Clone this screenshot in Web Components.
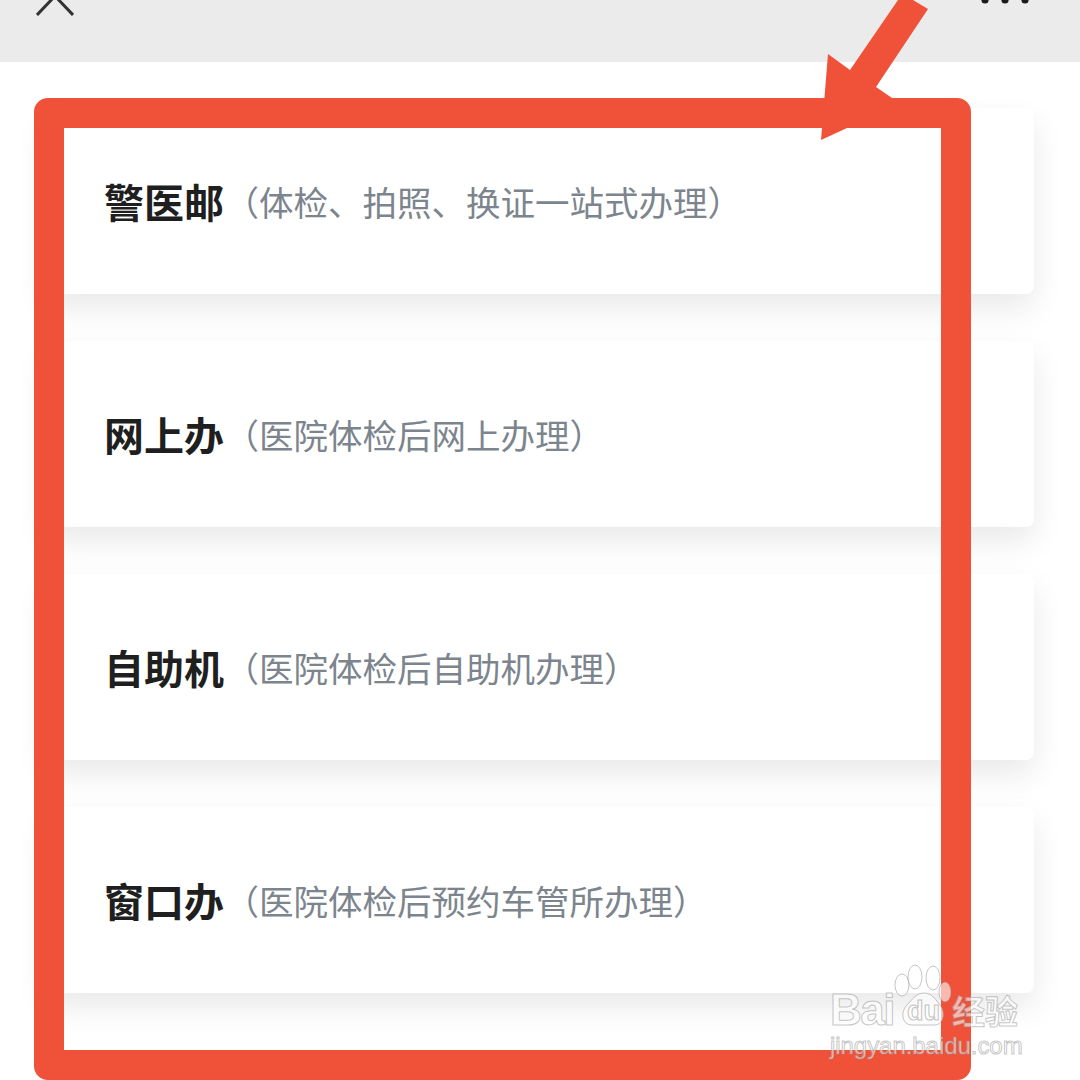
<!DOCTYPE html>
<html lang="zh">
<head>
<meta charset="utf-8">
<title>办理方式</title>
<style>
  html, body { margin: 0; padding: 0; background: #fff; }
  body { width: 1080px; height: 1080px; overflow: hidden; position: relative; font-family: "Noto Sans CJK SC", "Liberation Sans", sans-serif; }
</style>
</head>
<body>
<top-bar></top-bar>
<option-list>
  <option-card name="警医邮" note="（体检、拍照、换证一站式办理）"></option-card>
  <option-card name="网上办" note="（医院体检后网上办理）"></option-card>
  <option-card name="自助机" note="（医院体检后自助机办理）"></option-card>
  <option-card name="窗口办" note="（医院体检后预约车管所办理）"></option-card>
</option-list>
<red-mark></red-mark>
<baidu-mark></baidu-mark>

<script>
class TopBar extends HTMLElement {
    constructor() {
        super();
        this.attachShadow({ mode: 'open' });
        this.shadowRoot.innerHTML = `
            <style>
                :host {
                    display: flex;
                    justify-content: space-between;
                    align-items: flex-start;
                    height: 62px;
                    padding: 0 51px 0 36px;
                    background: #ebebeb;
                    overflow: hidden;
                }
                .close { margin-top: -22px; }
                .more { margin-top: -4px; }
            </style>
            <svg class="close" width="38" height="38" viewBox="0 0 38 38">
                <path d="M1 37 L19 18 L37 37" fill="none" stroke="#333" stroke-width="3"/>
            </svg>
            <svg class="more" width="48" height="8" viewBox="0 0 48 8" fill="#1a1a1a">
                <circle cx="4" cy="4" r="3.6"/>
                <circle cx="24" cy="4" r="3.6"/>
                <circle cx="44" cy="4" r="3.6"/>
            </svg>
        `;
    }
}

class OptionList extends HTMLElement {
    constructor() {
        super();
        this.attachShadow({ mode: 'open' });
        this.shadowRoot.innerHTML = `
            <style>
                :host {
                    display: flex;
                    flex-direction: column;
                    gap: 47px;
                    padding: 46px 46px 0;
                }
            </style>
            <slot></slot>
        `;
    }
}

class OptionCard extends HTMLElement {
    constructor() {
        super();
        this.attachShadow({ mode: 'open' });
    }

    connectedCallback() {
        this.shadowRoot.innerHTML = `
            <style>
                :host {
                    display: flex;
                    align-items: center;
                    height: 186px;
                    padding: 0 0 0 58px;
                    box-sizing: border-box;
                    background: #fff;
                    border-radius: 8px;
                    box-shadow: 0 14px 32px rgba(0,0,0,0.09);
                    white-space: nowrap;
                }
                .name {
                    font-size: 40px;
                    font-weight: 700;
                    color: #1f1f1f;
                }
                .note {
                    font-size: 34.5px;
                    margin-left: 0.5px;
                    color: #7c858d;
                }
            </style>
            <span class="name">${this.getAttribute('name')}</span>
            <span class="note">${this.getAttribute('note')}</span>
        `;
    }
}

class RedMark extends HTMLElement {
    constructor() {
        super();
        this.attachShadow({ mode: 'open' });
        this.shadowRoot.innerHTML = `
            <style>
                :host {
                    position: absolute;
                    left: 0;
                    top: 0;
                    width: 1080px;
                    height: 1080px;
                    pointer-events: none;
                }
                .box {
                    position: absolute;
                    left: 34px;
                    top: 98px;
                    width: 877px;
                    height: 922px;
                    border: 30px solid #ef5139;
                    border-radius: 14px;
                }
                svg { position: absolute; left: 0; top: 0; }
            </style>
            <div class="box"></div>
            <svg width="1080" height="200" viewBox="0 0 1080 200">
                <polygon fill="#ef5139" points="898,0 913,0 928,9 876,87 892,98 847,128 821,140 828,54 850,70"/>
            </svg>
        `;
    }
}

class BaiduMark extends HTMLElement {
    constructor() {
        super();
        this.attachShadow({ mode: 'open' });
        this.shadowRoot.innerHTML = `
            <style>
                :host {
                    position: absolute;
                    left: 826px;
                    top: 962px;
                    width: 200px;
                    height: 96px;
                    font-family: "Liberation Sans", sans-serif;
                    color: rgba(255,255,255,0.6);
                    -webkit-text-stroke: 1px rgba(150,150,150,0.55);
                    pointer-events: none;
                }
                .row { display: flex; align-items: flex-end; height: 66px; }
                .bai { font-size: 44px; font-weight: 700; line-height: 36px; letter-spacing: -1.5px; width: 66px; padding-left: 4px; box-sizing: border-box; }
                .paw { width: 60px; height: 66px; flex: none; }
                .jy {
                    font-family: "Noto Sans CJK SC", sans-serif;
                    font-size: 33px;
                    font-weight: 700;
                    line-height: 36px;
                }
                .url { font-size: 24px; line-height: 28px; margin-top: 4px; padding-left: 4px; letter-spacing: -0.05px; }
                .paw ellipse, .paw path { fill: rgba(255,255,255,0.6); stroke: rgba(150,150,150,0.55); stroke-width: 1; }
                .paw text { font-size: 27px; font-weight: 700; fill: rgba(255,255,255,0.4); stroke: rgba(150,150,150,0.6); stroke-width: 1; }
            </style>
            <div class="row">
                <span class="bai">Bai</span>
                <svg class="paw" viewBox="0 0 60 66">
                    <ellipse cx="10" cy="23" rx="7" ry="11"/>
                    <ellipse cx="23" cy="15" rx="7" ry="12"/>
                    <ellipse cx="41" cy="16" rx="7" ry="12"/>
                    <ellipse cx="53" cy="30" rx="6" ry="10"/>
                    <path d="M32 31 C40 31 44 38 48 43 C54 50 52 63 42 63 L20 63 C10 63 8 50 15 43 C20 38 24 31 32 31 Z"/>
                    <text x="15" y="58">du</text>
                </svg>
                <span class="jy">经验</span>
            </div>
            <div class="url">jingyan.baidu.com</div>
        `;
    }
}

customElements.define('top-bar', TopBar);
customElements.define('option-list', OptionList);
customElements.define('option-card', OptionCard);
customElements.define('red-mark', RedMark);
customElements.define('baidu-mark', BaiduMark);
</script>
</body>
</html>
